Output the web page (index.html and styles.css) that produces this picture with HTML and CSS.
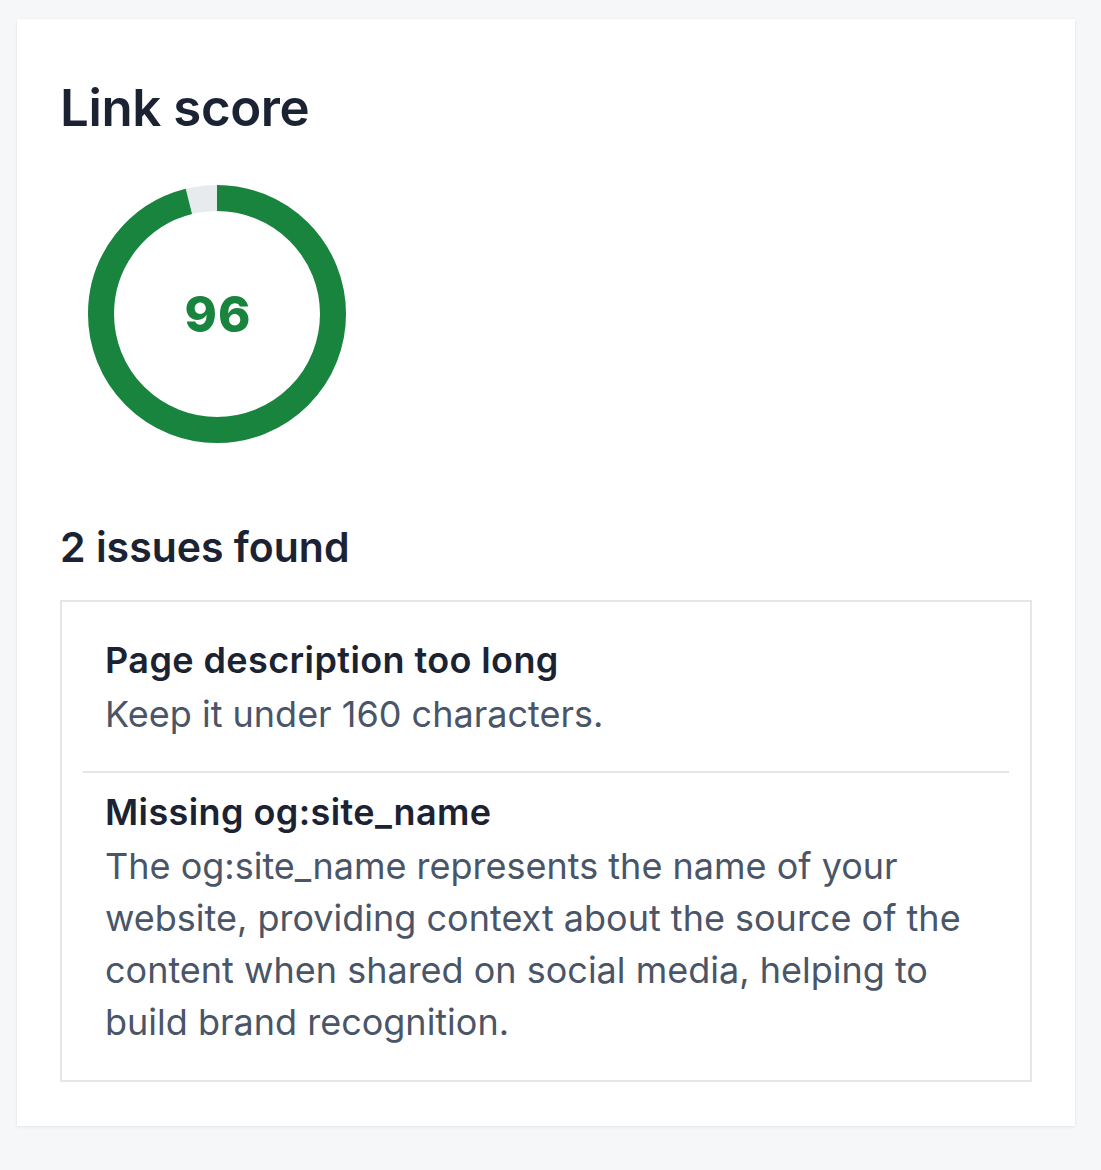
FILE: index.html
```html
<!DOCTYPE html>
<html lang="en">
<head>
<meta charset="utf-8">
<title>Link score</title>
<link rel="stylesheet" href="styles.css">
</head>
<body>
<main class="card">
  <h1 class="card-title">Link score</h1>
  <div class="score">
    <svg class="donut" width="258" height="258" viewBox="0 0 258 258" aria-label="Score 96 of 100">
      <circle class="donut-track" cx="129" cy="129" r="116"></circle>
      <circle class="donut-value" cx="129" cy="129" r="116" stroke-dasharray="699.7 728.85" transform="rotate(-90 129 129)"></circle>
      <text class="donut-label" x="130" y="147" text-anchor="middle">96</text>
    </svg>
  </div>
  <h2 class="issues-title">2 issues found</h2>
  <ul class="issues">
    <li class="issue">
      <div class="issue-name">Page description too long</div>
      <div class="issue-text">Keep it under 160 characters.</div>
    </li>
    <li class="issue">
      <div class="issue-name">Missing og:site_name</div>
      <div class="issue-text">The og:site_name represents the name of your website, providing context about the source of the content when shared on social media, helping to build brand recognition.</div>
    </li>
  </ul>
</main>
</body>
</html>
```
FILE: styles.css
```css
html, body {
  margin: 0;
  padding: 0;
}
body {
  background: #f6f7f9;
  font-family: Inter, "Noto Sans", "Liberation Sans", sans-serif;
  color: #1b2333;
  padding: 19px 0 0 17px;
  min-height: 1170px;
  box-sizing: border-box;
}
.card {
  width: 1058px;
  box-sizing: border-box;
  background: #ffffff;
  padding: 14px 43px 44px;
  box-shadow: 0 1px 3px rgba(20, 30, 50, 0.08), 0 0 1px rgba(20, 30, 50, 0.06);
}
.card-title {
  margin: 0;
  padding-top: 44px;
  font-size: 51px;
  line-height: 62px;
  font-weight: 600;
  letter-spacing: -0.4px;
  color: #1b2333;
}
.score {
  display: flex;
  padding: 46px 0 0 28px;
}
.donut {
  display: block;
}
.donut-track {
  fill: none;
  stroke: #e8ebee;
  stroke-width: 26;
}
.donut-value {
  fill: none;
  stroke: #18843e;
  stroke-width: 26;
}
.donut-label {
  fill: #18843e;
  font-family: Inter, "Noto Sans", "Liberation Sans", sans-serif;
  font-size: 49px;
  font-weight: 800;
  letter-spacing: 1px;
}
.issues-title {
  margin: 79px 0 0;
  font-size: 41px;
  line-height: 51px;
  font-weight: 600;
  color: #1b2333;
}
.issues {
  list-style: none;
  margin: 27px 0 0;
  padding: 32px 21px;
  border: 2px solid #e3e7ec;
}
.issue {
  padding: 0 22px 31px;
}
.issue + .issue {
  border-top: 2px solid #e3e7ec;
  padding-top: 13px;
  padding-bottom: 0;
}
.issue-name {
  font-size: 36px;
  line-height: 52px;
  font-weight: 600;
  letter-spacing: 0.4px;
  color: #1b2333;
}
.issue-text {
  margin-top: 2px;
  font-size: 36px;
  line-height: 52px;
  font-weight: 400;
  color: #4a5567;
}
```
